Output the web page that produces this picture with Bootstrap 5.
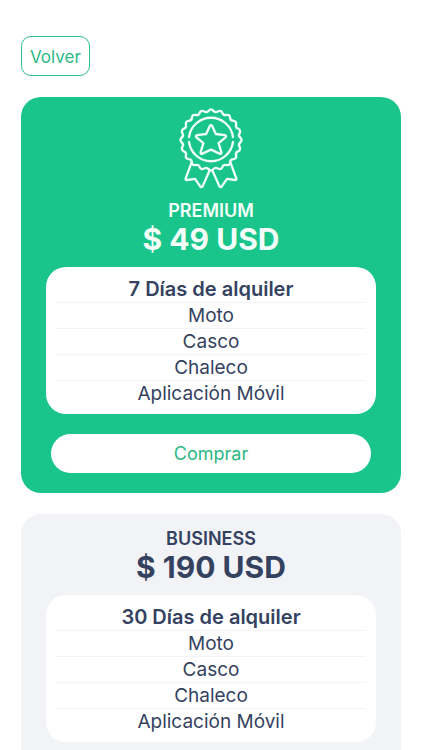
<!DOCTYPE html>
<html lang="es">
<head>
<meta charset="utf-8">
<meta name="viewport" content="width=device-width, initial-scale=1">
<title>Planes de alquiler</title>
<link href="https://cdn.jsdelivr.net/npm/bootstrap@5.3.0/dist/css/bootstrap.min.css" rel="stylesheet">
<style>
  body { font-family: Inter, "Liberation Sans", sans-serif; color: #34425f; background: #fff; }
  .page { padding: 36px 21px 0; gap: 21px; }
  .back-btn { height: 40px; padding: 1px 8px 0; border: 1px solid #2cc28d; border-radius: 10px; color: #2cb886; font-size: 17px; line-height: 24px; }
  .plan { border-radius: 20px; padding: 11px 25px 20px; }
  .plan-premium { background: #1ac58b; color: #f4fffa; }
  .plan-business { background: #f2f3f7; padding-top: 14px; border-radius: 20px 20px 0 0; }
  .plan-icon { width: 64px; height: 82px; margin-bottom: 10px; }
  .plan-name { font-size: 18px; line-height: 22px; font-weight: 600; }
  .plan-price { font-size: 30px; line-height: 34px; font-weight: 700; margin-bottom: 11px; }
  .plan-list { background: #fff; color: #34425f; border-radius: 20px; padding: 10px 10px 8px; font-size: 19px; line-height: 25px; }
  .plan-list li + li { border-top: 1px solid #f3f3f5; }
  .plan-list li:first-child { font-size: 20px; font-weight: 600; }
  .buy-btn { height: 39px; margin: 20px 5px 0; padding: 0; background: #fff; color: #2cb886; font-size: 18px; line-height: 24px; }
  .back-btn:hover, .buy-btn:hover { background: #effbf6; color: #1ac58b; }
</style>
<script src="https://cdn.jsdelivr.net/npm/bootstrap@5.3.0/dist/js/bootstrap.bundle.min.js"></script>
</head>
<body>
<main class="page d-flex flex-column min-vh-100">
  <button type="button" class="btn back-btn align-self-start">Volver</button>

  <section class="plan plan-premium d-flex flex-column text-center">
    <svg class="plan-icon align-self-center" viewBox="-32 -32 64 82" fill="none" stroke="#effff8" stroke-width="2.3" stroke-linecap="round" stroke-linejoin="round" aria-hidden="true">
      <path id="edge" d="M2.3-29.3Q4.3-26.9 6.9-28.6Q9.8-30.2 11.3-27.2Q12.3-24.2 15.4-25.1Q18.7-25.7 19.1-22.4Q19.2-19.2 22.4-19.1Q25.7-18.7 25.1-15.4Q24.2-12.3 27.2-11.3Q30.2-9.8 28.6-6.9Q26.9-4.3 29.3-2.3Q31.8 0 29.3 2.3"/>
      <use href="#edge" transform="rotate(90)"/>
      <use href="#edge" transform="rotate(180)"/>
      <use href="#edge" transform="rotate(270)"/>
      <path d="M-22-3A22.2 22.2 0 0 1 22-3M22 2A22.2 22.2 0 0 1-22 2"/>
      <path d="M-1.2-14Q0-15.8 1.2-14L4.8-6L14-4.8Q15.8-4.2 14.6-2.6L7.6 3.2L10.4 12.4Q10.4 14.4 8.6 13.6L0 9.6L-8.6 13.6Q-10.4 14.4-10.4 12.4L-7.6 3.2L-14.6-2.6Q-15.8-4.2-14-4.8L-4.8-6Z"/>
      <path d="M-19.4 22.4L-25.4 38.6Q-25.6 40.2-24 40L-16 38.8L-10.6 46.6Q-9.4 47.8-8.4 46.4L-1.2 30M19.4 22.4L25.4 38.6Q25.6 40.2 24 40L16 38.8L10.6 46.6Q9.4 47.8 8.4 46.4L1.2 30"/>
    </svg>
    <h2 class="plan-name mb-0">PREMIUM</h2>
    <p class="plan-price">$ 49 USD</p>
    <ul class="plan-list list-unstyled mb-0">
      <li>7 Días de alquiler</li>
      <li>Moto</li>
      <li>Casco</li>
      <li>Chaleco</li>
      <li>Aplicación Móvil</li>
    </ul>
    <button type="button" class="btn buy-btn rounded-pill border-0">Comprar</button>
  </section>

  <section class="plan plan-business d-flex flex-column flex-grow-1 text-center pb-0">
    <h2 class="plan-name mb-0">BUSINESS</h2>
    <p class="plan-price">$ 190 USD</p>
    <ul class="plan-list list-unstyled mb-0">
      <li>30 Días de alquiler</li>
      <li>Moto</li>
      <li>Casco</li>
      <li>Chaleco</li>
      <li>Aplicación Móvil</li>
    </ul>
  </section>
</main>
</body>
</html>
